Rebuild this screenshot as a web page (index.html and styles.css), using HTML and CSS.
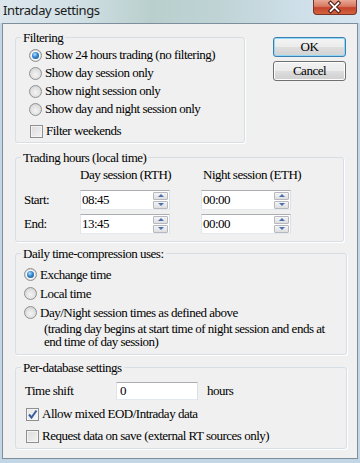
FILE: index.html
```html
<!DOCTYPE html>
<html lang="en">
<head>
    <meta charset="UTF-8">
    <title>Intraday settings</title>
    <link rel="stylesheet" href="styles.css">
</head>
<body>
    <div class="window">
        <div class="titlebar">
            <span class="title">Intraday settings</span>
            <span class="close">
                <svg width="44" height="15" viewBox="0 0 44 15">
                    <path d="M18 3 L26 11 M26 3 L18 11" stroke="#4a1b14" stroke-width="4" stroke-linecap="square"/>
                    <path d="M18 3 L26 11 M26 3 L18 11" stroke="#fff" stroke-width="2" stroke-linecap="square"/>
                </svg>
            </span>
        </div>

        <div class="client">
            <div class="top-row">
                <fieldset class="group filtering">
                    <legend>Filtering</legend>
                    <div class="opts">
                        <div class="opt"><span class="radio on"></span>Show 24 hours trading (no filtering)</div>
                        <div class="opt"><span class="radio"></span>Show day session only</div>
                        <div class="opt"><span class="radio"></span>Show night session only</div>
                        <div class="opt"><span class="radio"></span>Show day and night session only</div>
                        <div class="opt weekend"><span class="check"></span>Filter weekends</div>
                    </div>
                </fieldset>
                <div class="buttons">
                    <button class="btn default">OK</button>
                    <button class="btn">Cancel</button>
                </div>
            </div>

            <fieldset class="group hours">
                <legend>Trading hours (local time)</legend>
                <div class="hours-grid">
                    <span></span>
                    <span class="head">Day session (RTH)</span>
                    <span class="head night">Night session (ETH)</span>

                    <span class="lbl">Start:</span>
                    <div class="spinbox"><span class="val">08:45</span><span class="spin"><span class="up"></span><span class="dn"></span></span></div>
                    <div class="spinbox"><span class="val">00:00</span><span class="spin"><span class="up"></span><span class="dn"></span></span></div>

                    <span class="lbl">End:</span>
                    <div class="spinbox"><span class="val">13:45</span><span class="spin"><span class="up"></span><span class="dn"></span></span></div>
                    <div class="spinbox"><span class="val">00:00</span><span class="spin"><span class="up"></span><span class="dn"></span></span></div>
                </div>
            </fieldset>

            <fieldset class="group daily">
                <legend>Daily time-compression uses:</legend>
                <div class="opts">
                    <div class="opt"><span class="radio on"></span>Exchange time</div>
                    <div class="opt"><span class="radio"></span>Local time</div>
                    <div class="opt"><span class="radio"></span>Day/Night session times as defined above</div>
                    <p class="note">(trading day begins at start time of night session and ends at<br>end time of day session)</p>
                </div>
            </fieldset>

            <fieldset class="group perdb">
                <legend>Per-database settings</legend>
                <div class="shift-row">
                    <span class="shift-lbl">Time shift</span>
                    <div class="textbox">0</div>
                    <span class="unit">hours</span>
                </div>
                <div class="opt chk-row"><span class="check on">
                    <svg width="11" height="11" viewBox="0 0 11 11"><path d="M2 5.5 L4.5 8.5 L9.5 1.5" fill="none" stroke="#3a5f9e" stroke-width="2"/></svg>
                </span>Allow mixed EOD/Intraday data</div>
                <div class="opt chk-row"><span class="check"></span>Request data on save (external RT sources only)</div>
            </fieldset>
        </div>
    </div>
</body>
</html>
```

FILE: styles.css
```css
body {
    margin: 0;
    width: 360px;
    height: 463px;
    overflow: hidden;
    background: #c3d6e5;
    font-family: "Liberation Serif", "Times New Roman", "DejaVu Serif", serif;
    font-size: 13px;
    letter-spacing: -0.5px;
    color: #000;
}

.window {
    height: 463px;
    display: flex;
    flex-direction: column;
}

.titlebar {
    height: 23px;
    flex: none;
    display: flex;
    align-items: flex-start;
    padding-left: 3px;
    background: linear-gradient(90deg, #dbe6ed 0%, #d3e1e6 20%, #b9cfcd 42%, #bfd3d5 60%, #cfe0ea 85%, #d6e5ef 100%);
}

.title {
    font-family: "Noto Sans", sans-serif;
    font-size: 13px;
    letter-spacing: -0.4px;
    line-height: 20px;
    color: #1b1b1b;
}

.close {
    margin-left: auto;
    margin-right: 3px;
    width: 44px;
    height: 15px;
    display: flex;
    border: 1px solid #7b3326;
    border-top: none;
    border-radius: 0 0 4px 4px;
    box-sizing: border-box;
    background: linear-gradient(#e9a896 0%, #d77a63 45%, #c5442b 55%, #d3633f 100%);
}

.close svg {
    margin-left: -1px;
}

.client {
    flex: 1;
    margin: 0 2px 4px 2px;
    border: 1px solid #7f8e9c;
    background: #f0f0f0;
    padding: 6px 0 0 12px;
}

.top-row {
    display: flex;
    align-items: flex-start;
}

.group {
    margin: 0;
    padding: 0 0 0 5px;
    border: 1px solid #d5dfe5;
    border-radius: 3px;
    box-shadow: 1px 1px 0 #fff;
    box-sizing: border-box;
}

.group legend {
    padding: 0 2px;
    line-height: 15px;
}

.opts {
    display: flex;
    flex-direction: column;
}

.opt {
    display: flex;
    align-items: center;
    height: 18px;
    white-space: nowrap;
}

.radio {
    width: 13px;
    height: 13px;
    box-sizing: border-box;
    border-radius: 50%;
    border: 1px solid #8f9192;
    background: radial-gradient(circle at 50% 60%, #f4f4f4 0%, #e2e2e2 50%, #c8c8c8 100%);
    margin-right: 3px;
    display: flex;
    align-items: center;
    justify-content: center;
    flex: none;
}

.radio.on::after {
    content: '';
    width: 7px;
    height: 7px;
    border-radius: 50%;
    background: radial-gradient(circle at 40% 35%, #b8e3ff 0%, #3d8ed6 40%, #0b4a8b 100%);
    box-shadow: 0 0 0 1px #ffffff;
}

.check {
    width: 13px;
    height: 13px;
    box-sizing: border-box;
    border: 1px solid #8f8f8f;
    background: linear-gradient(135deg, #dcdcdc 0%, #f2f2f2 100%);
    box-shadow: inset 0 0 0 1px #f4f4f4;
    margin-right: 3px;
    display: flex;
    align-items: center;
    justify-content: center;
    flex: none;
}

.check.on {
    background: linear-gradient(135deg, #e6e6e6 0%, #fafafa 100%);
}

/* filtering */

.filtering {
    width: 230px;
    padding-bottom: 2px;
}

.filtering .opts {
    padding: 1px 0 0 8px;
}

.weekend {
    margin-top: 4px;
    padding-left: 1px;
}

.buttons {
    margin: 7px 0 0 28px;
    display: flex;
    flex-direction: column;
    gap: 4px;
}

.btn {
    width: 73px;
    height: 20px;
    padding: 0;
    border: 1px solid #707070;
    border-radius: 3px;
    background: linear-gradient(#f2f2f2 0%, #ebebeb 48%, #dddddd 52%, #cfcfcf 100%);
    box-shadow: inset 0 0 0 1px #fcfcfc;
    font-family: inherit;
    font-size: 13px;
    letter-spacing: -0.5px;
    color: #000;
}

.btn.default {
    border-color: #3c7fb1;
    box-shadow: inset 0 0 0 1px #8fd8f8;
    background: linear-gradient(#f4f4f4 0%, #ececec 48%, #dedede 52%, #d2d2d2 100%);
}

/* trading hours */

.hours {
    width: 329px;
    margin-top: 7px;
    padding-bottom: 7px;
}

.hours-grid {
    display: grid;
    grid-template-columns: 56px 121px 90px;
    row-gap: 4px;
    padding: 2px 0 0 3px;
    align-items: center;
}

.head {
    line-height: 15px;
    margin-bottom: 4px;
    white-space: nowrap;
}

.head.night {
    padding-left: 2px;
}

.spinbox {
    width: 90px;
    height: 20px;
    box-sizing: border-box;
    border: 1px solid #abadb3;
    border-color: #abadb3 #dbdfe6 #e3e9ef #e2e3ea;
    background: #fff;
    display: flex;
    align-items: center;
    padding-left: 1px;
}

.val {
    flex: 1;
}

.spin {
    width: 15px;
    margin-right: 1px;
    display: flex;
    flex-direction: column;
    gap: 1px;
}

.spin span {
    height: 8px;
    box-sizing: border-box;
    border: 1px solid #b5b8bd;
    border-radius: 1px;
    background: linear-gradient(#f5f5f5, #dedede);
    display: flex;
    align-items: center;
    justify-content: center;
}

.spin .up::after,
.spin .dn::after {
    content: '';
    border-left: 3px solid transparent;
    border-right: 3px solid transparent;
}

.spin .up::after {
    border-bottom: 3px solid #4d6fb0;
}

.spin .dn::after {
    border-top: 3px solid #4d6fb0;
}

/* daily */

.daily {
    width: 332px;
    margin-top: 4px;
    padding-bottom: 6px;
}

.daily .opts {
    padding: 4px 0 0 3px;
}

.daily .opt {
    height: 19px;
}

.note {
    margin: 0 0 0 20px;
    line-height: 13px;
}

/* per-database */

.perdb {
    width: 332px;
    margin-top: 5px;
    padding-bottom: 3px;
}

.shift-row {
    display: flex;
    align-items: center;
    height: 18px;
    margin-top: 7px;
    padding-left: 4px;
}

.shift-lbl {
    width: 91px;
}

.textbox {
    width: 82px;
    height: 18px;
    box-sizing: border-box;
    border: 1px solid #abadb3;
    border-color: #abadb3 #dbdfe6 #e3e9ef #e2e3ea;
    background: #fff;
    padding-left: 3px;
    line-height: 16px;
}

.unit {
    margin-left: 9px;
}

.chk-row {
    padding-left: 5px;
    margin-top: 5px;
}

.chk-row + .chk-row {
    margin-top: 4px;
}
```
